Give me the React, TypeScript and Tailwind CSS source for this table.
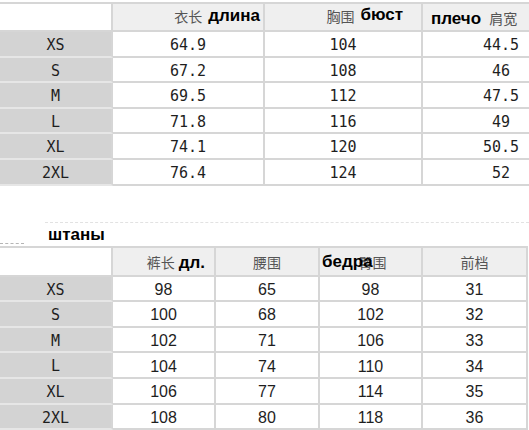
import React from "react";

const topRows = [
  ["XS", "64.9", "104", "44.5"],
  ["S", "67.2", "108", "46"],
  ["M", "69.5", "112", "47.5"],
  ["L", "71.8", "116", "49"],
  ["XL", "74.1", "120", "50.5"],
  ["2XL", "76.4", "124", "52"],
];

const pantsRows = [
  ["XS", "98", "65", "98", "31"],
  ["S", "100", "68", "102", "32"],
  ["M", "102", "71", "106", "33"],
  ["L", "104", "74", "110", "34"],
  ["XL", "106", "77", "114", "35"],
  ["2XL", "108", "80", "118", "36"],
];

const cjk = "font-['Noto_Sans_CJK_SC',sans-serif] text-[14px] text-[#555]";
const ru = "font-['Liberation_Sans',Arial,sans-serif] font-bold text-[17px] text-black leading-none";
const mono = "font-['DejaVu_Sans_Mono',monospace] text-[15px] text-[#1e1e1e]";

function SizeCell({ label }: { label: string }) {
  return (
    <div className={`h-[25.6px] flex items-center justify-center pt-[3px] bg-[#d3d3d3] border-r-2 border-b-2 border-r-[#d6d6d6] border-b-[#e6e6e6] ${mono}`}>
      {label}
    </div>
  );
}

export default function App() {
  return (
    <div className="w-[529px] h-[430px] overflow-hidden bg-white">
      {/* jacket table */}
      <div className="pt-[2px]">
        <div className="grid grid-cols-[113px_152px_158px_156px] w-[579px]">
          <div className="h-[30px] bg-white border-t-2 border-b-2 border-r-2 border-[#d6d6d6]" />
          <div className="h-[30px] bg-[#efefef] border-t-2 border-b-2 border-r-2 border-[#d6d6d6] flex justify-end pr-[3px]">
            <span className={`${cjk} self-end pb-[3px] mr-[6px]`}>衣长</span>
            <span className={`${ru} self-start pt-[3px]`}>длина</span>
          </div>
          <div className="h-[30px] bg-[#efefef] border-t-2 border-b-2 border-r-2 border-[#d6d6d6] flex justify-end pr-[18px]">
            <span className={`${cjk} self-end pb-[3px] mr-[6px]`}>胸围</span>
            <span className={`${ru} self-start pt-[2px]`}>бюст</span>
          </div>
          <div className="h-[30px] bg-[#efefef] border-t-2 border-b-2 border-[#d6d6d6] flex items-center pl-[8px] pt-[3px]">
            <span className={ru}>плечо</span>
            <span className={`${cjk} text-[13px] ml-[8px]`}>肩宽</span>
          </div>
          {topRows.map((r) => (
            <React.Fragment key={r[0]}>
              <SizeCell label={r[0]} />
              {r.slice(1).map((v, i) => (
                <div
                  key={i}
                  className={`h-[25.6px] flex items-center justify-center pt-[3px] border-b-2 border-[#d6d6d6] ${i < 2 ? "border-r-2" : ""} ${mono}`}
                >
                  {v}
                </div>
              ))}
            </React.Fragment>
          ))}
        </div>
      </div>

      {/* divider */}
      <div className="h-[36px]" />
      <div className="ml-[45px] border-t border-dashed border-[#e2e2e2]" />
      <div className={`h-[20px] pl-[48px] pt-[3px] ${ru}`}>штаны</div>
      <div className="w-[24px] border-t border-dashed border-[#b5b5b5]" />
      <div className="h-[2px]" />

      {/* pants table */}
      <div className="grid grid-cols-[113px_103px_104px_103px_105px] w-[528px]">
        <div className="h-[31px] bg-white border-t-2 border-b-2 border-r-2 border-[#d6d6d6]" />
        <div className="h-[31px] bg-[#efefef] border-t-2 border-b-2 border-r-2 border-[#d6d6d6] flex items-center justify-end pr-[9px] pt-[2px]">
          <span className={`${cjk} mr-[4px]`}>裤长</span>
          <span className={ru}>дл.</span>
        </div>
        <div className="h-[31px] bg-[#efefef] border-t-2 border-b-2 border-r-2 border-[#d6d6d6] flex items-center justify-center pt-[2px]">
          <span className={cjk}>腰围</span>
        </div>
        <div className="relative h-[31px] bg-[#efefef] border-t-2 border-b-2 border-r-2 border-[#d6d6d6] flex items-center justify-center pt-[2px]">
          <span className={`${cjk} ml-[4px]`}>臀围</span>
          <span className={`${ru} absolute left-[2px] top-[5px]`}>бедра</span>
        </div>
        <div className="h-[31px] bg-[#efefef] border-t-2 border-b-2 border-r-2 border-[#d6d6d6] flex items-center justify-center pt-[2px]">
          <span className={cjk}>前档</span>
        </div>
        {pantsRows.map((r) => (
          <React.Fragment key={r[0]}>
            <SizeCell label={r[0]} />
            {r.slice(1).map((v, i) => (
              <div
                key={i}
                className="h-[25.6px] flex items-center justify-center pt-[3px] border-b-2 border-r-2 border-[#d6d6d6] font-['Liberation_Sans',Arial,sans-serif] text-[16px] text-[#1e1e1e]"
              >
                {v}
              </div>
            ))}
          </React.Fragment>
        ))}
      </div>
    </div>
  );
}
